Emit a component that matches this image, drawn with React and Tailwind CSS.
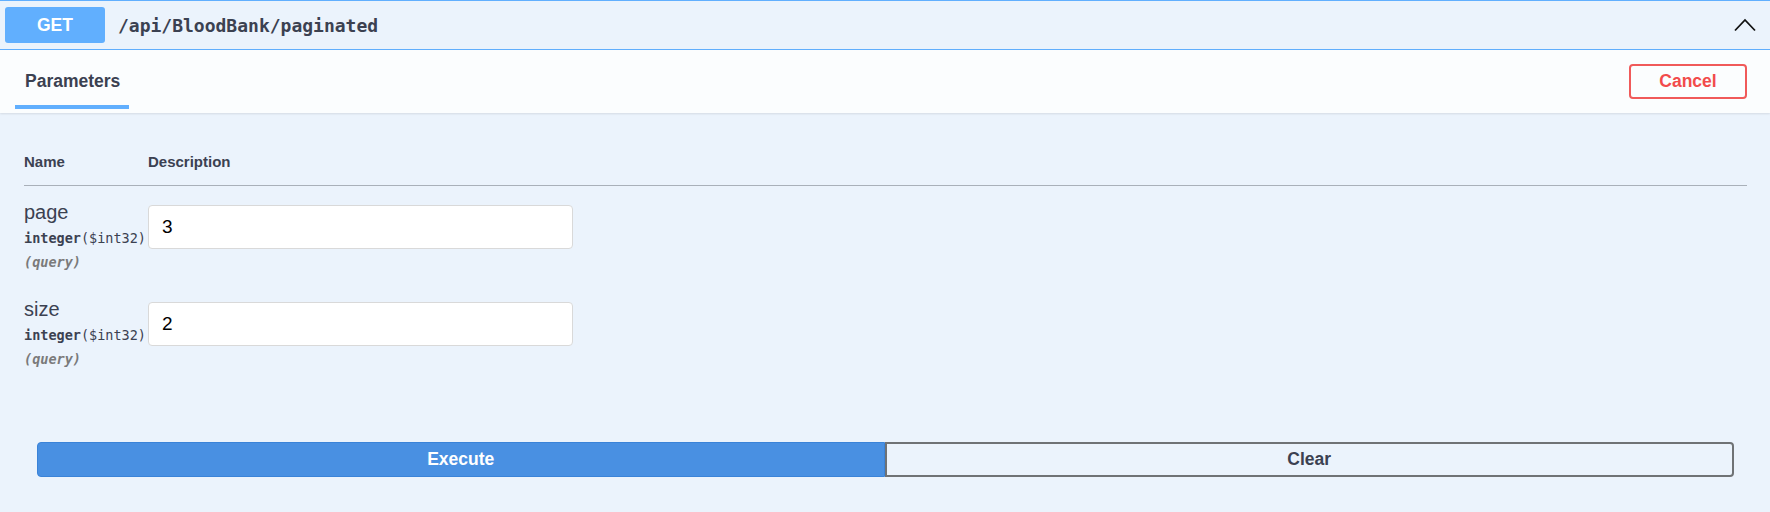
import { useState } from 'react'

const params = [
  { name: 'page', type: 'integer', format: '$int32', value: '3' },
  { name: 'size', type: 'integer', format: '$int32', value: '2' },
]

function Chevron() {
  return (
    <svg width="22" height="14" viewBox="0 0 22 14" fill="none">
      <polyline points="1,12.5 11,2 21,12.5" stroke="#111" strokeWidth="1.8" />
    </svg>
  )
}

export default function App() {
  const [values, setValues] = useState(params.map((p) => p.value))

  const handleChange = (i, v) => {
    const next = [...values]
    next[i] = v
    setValues(next)
  }

  return (
    <div className="w-[1770px] h-[512px] bg-[#ebf3fc] border-t border-[#61affe] font-['Liberation_Sans',Arial,sans-serif] text-[#3b4151] overflow-hidden">
      {/* Summary */}
      <div className="h-[49px] flex items-center border-b border-[#61affe] pl-[5px] pr-[14px]">
        <div className="w-[100px] h-[36px] rounded-[3px] bg-[#61affe] text-white font-bold text-[17.5px] flex items-center justify-center">
          GET
        </div>
        <span className="ml-[13px] font-['DejaVu_Sans_Mono',monospace] font-semibold text-[18px] text-[#3b4151]">
          /api/BloodBank/paginated
        </span>
        <div className="ml-auto flex items-center">
          <Chevron />
        </div>
      </div>

      {/* Tab header */}
      <div className="h-[63px] bg-[#fbfdfe] shadow-[0_1px_2px_rgba(0,0,0,0.1)] flex items-center pl-[15px] pr-[23px]">
        <div className="relative h-full flex items-center">
          <span className="px-[10px] font-bold text-[17.5px] text-[#3b4151]">Parameters</span>
          <div className="absolute left-0 bottom-[4px] w-[114px] h-[4px] bg-[#61affe]" />
        </div>
        <button className="ml-auto w-[118px] h-[35px] rounded-[4px] border-2 border-[#f05a5a] text-[#f24b4b] font-bold text-[17.5px] bg-transparent">
          Cancel
        </button>
      </div>

      {/* Parameters table */}
      <div className="pl-[24px] pr-[23px] pt-[40px]">
        <div className="flex border-b border-[#a9b0b9] pb-[14px] text-[15px] font-bold leading-[18px]">
          <div className="w-[124px]">Name</div>
          <div>Description</div>
        </div>

        {params.map((p, i) => (
          <div key={p.name} className="flex items-start pt-[14px] pb-[11px]">
            <div className="w-[124px] shrink-0">
              <div className="text-[20px] leading-[24px]">{p.name}</div>
              <div className="mt-[4px] leading-[20px] font-['DejaVu_Sans_Mono',monospace] text-[13.5px] font-semibold whitespace-nowrap">
                {p.type}
                <span className="font-normal">({p.format})</span>
              </div>
              <div className="mt-[4px] leading-[20px] font-['DejaVu_Sans_Mono',monospace] text-[13.5px] italic font-semibold text-[#7a7a7a]">
                (query)
              </div>
            </div>
            <input
              type="text"
              value={values[i]}
              onChange={(e) => handleChange(i, e.target.value)}
              className="mt-[5px] w-[425px] h-[44px] rounded-[4px] border border-[#d9d9d9] bg-white pl-[13px] text-[19px] text-black outline-none"
            />
          </div>
        ))}

        {/* Actions */}
        <div className="flex px-[13px] mt-[62px]">
          <button className="flex-1 h-[35px] rounded-l-[4px] bg-[#4990e2] border border-[#3a83d8] text-white font-bold text-[17.5px]">
            Execute
          </button>
          <button className="flex-1 h-[35px] rounded-r-[4px] border-2 border-[#6f7275] bg-transparent text-[#3b4151] font-bold text-[17.5px]">
            Clear
          </button>
        </div>
      </div>
    </div>
  )
}
